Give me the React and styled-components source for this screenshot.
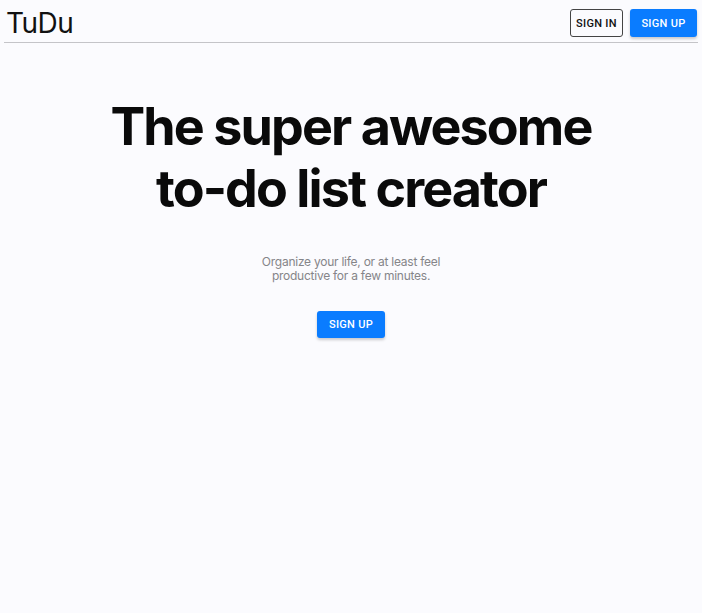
import styled, { createGlobalStyle } from "styled-components"

const GlobalStyle = createGlobalStyle`
    html, body {
        margin: 0;
        padding: 0;
        background: #fbfbfe;
        font-family: Inter, "Liberation Sans", sans-serif;
    }
`

const Page = styled.div`
    min-height: 613px;
    background: #fbfbfe;
`

const Header = styled.header`
    display: flex;
    align-items: center;
    justify-content: space-between;
    margin: 0 4px;
    padding: 9px 1px 5px 2px;
    border-bottom: 1px solid #c4c4c8;
`

const Logo = styled.h1`
    margin: 0;
    font-size: 28px;
    font-weight: 400;
    line-height: 28px;
    color: #111;
    letter-spacing: -0.5px;
`

const Actions = styled.div`
    display: flex;
    gap: 7px;
`

const Button = styled.button`
    height: ${p => (p.$small ? "27px" : "28px")};
    padding: 0 ${p => (p.$outlined ? "5px" : "11.5px")};
    font-family: Roboto, "Liberation Sans", sans-serif;
    font-size: 11px;
    font-weight: 500;
    letter-spacing: 0.3px;
    text-transform: uppercase;
    border-radius: 3px;
    cursor: pointer;
    color: ${p => (p.$outlined ? "#111" : "#fff")};
    background: ${p => (p.$outlined ? "transparent" : "#0a7cff")};
    border: ${p => (p.$outlined ? "1px solid #444" : "none")};
    box-shadow: ${p => (p.$outlined ? "none" : "0 2px 3px rgba(0, 0, 0, 0.2)")};
`

const Hero = styled.section`
    display: flex;
    flex-direction: column;
    align-items: center;
    text-align: center;
    padding-top: 53px;
`

const Title = styled.h2`
    margin: 0;
    font-size: 52px;
    font-weight: 700;
    line-height: 62px;
    letter-spacing: -1.9px;
    color: #0a0a0a;
`

const Subtitle = styled.p`
    margin: 35px 0 28px;
    width: 200px;
    font-size: 12px;
    line-height: 14px;
    letter-spacing: -0.25px;
    color: #858589;
`

const Pesquisa = () => (
    <Page>
        <GlobalStyle />
        <Header>
            <Logo>TuDu</Logo>
            <Actions>
                <Button $outlined>Sign in</Button>
                <Button>Sign up</Button>
            </Actions>
        </Header>
        <Hero>
            <Title>
                The super awesome
                <br />
                to-do list creator
            </Title>
            <Subtitle>Organize your life, or at least feel productive for a few minutes.</Subtitle>
            <Button $small>Sign up</Button>
        </Hero>
    </Page>
)

export default Pesquisa
